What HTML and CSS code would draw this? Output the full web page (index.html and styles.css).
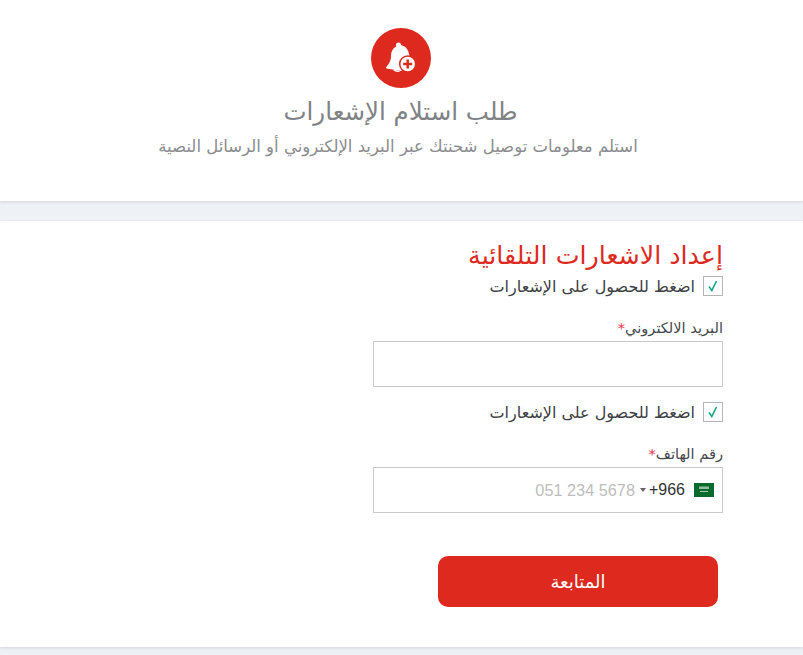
FILE: index.html
```html
<!DOCTYPE html>
<html lang="ar" dir="rtl">
<head>
<meta charset="utf-8">
<title>طلب استلام الإشعارات</title>
<link rel="stylesheet" href="styles.css">
</head>
<body>
<header class="hero">
  <div class="hero-icon">
    <svg viewBox="0 0 60 60" width="60" height="60" aria-hidden="true">
      <circle class="bell" cx="27.500" cy="17" r="2.500"/>
      <path class="bell" d="M25 18.500C30 15.500 35.500 18 37.500 24L39 30L40 38L30 43L15.500 40.500C14.800 40 15 39.300 15.500 38.800C19 35 20 31.500 20 28C20 24 21.500 20.500 25 18.500Z"/>
      <path class="bell" d="M22 41.500L29 43C28 44.500 24 44.500 22 41.500Z"/>
      <circle class="badge" cx="36.700" cy="36" r="8"/>
      <path class="plus" d="M36.700 31.500v9M32.200 36h9"/>
    </svg>
  </div>
  <h1 class="hero-title">طلب استلام الإشعارات</h1>
  <p class="hero-sub">استلم معلومات توصيل شحنتك عبر البريد الإلكتروني أو الرسائل النصية</p>
</header>
<main class="panel">
  <form class="form">
    <h2 class="form-title">إعداد الاشعارات التلقائية</h2>
    <label class="check">
      <span class="box"><svg viewBox="0 0 18 18" width="18" height="18" aria-hidden="true"><path class="tick" d="M5 9.500l2.800 4L12.500 4"/></svg></span>
      <span>اضغط للحصول على الإشعارات</span>
    </label>
    <div class="field">
      <div class="field-label">البريد الالكتروني<span class="req">*</span></div>
      <div class="input"></div>
    </div>
    <label class="check check-second">
      <span class="box"><svg viewBox="0 0 18 18" width="18" height="18" aria-hidden="true"><path class="tick" d="M5 9.500l2.800 4L12.500 4"/></svg></span>
      <span>اضغط للحصول على الإشعارات</span>
    </label>
    <div class="field field-phone">
      <div class="field-label">رقم الهاتف<span class="req">*</span></div>
      <div class="input phone" dir="ltr">
        <span class="placeholder">051 234 5678</span>
        <span class="caret"></span>
        <span class="code">+966</span>
        <svg class="flag" viewBox="0 0 20 14" width="20" height="14" aria-hidden="true">
          <rect width="20" height="14" fill="#0b6b2e"/>
          <rect x="5" y="3.500" width="10" height="2.500" fill="#8fbb9f"/>
          <rect x="6" y="8" width="8" height="1" fill="#a9cbb5"/>
        </svg>
      </div>
    </div>
    <div class="actions"><button type="button" class="submit">المتابعة</button></div>
  </form>
</main>
<div class="foot"></div>
</body>
</html>
```
FILE: styles.css
```css
* { box-sizing: border-box; }
html, body { margin: 0; padding: 0; }
body {
  background: #eef1f6;
  font-family: "DejaVu Sans", "Noto Sans", sans-serif;
  height: 655px;
  overflow: hidden;
}
.hero {
  background: #fff;
  height: 201px;
  padding-top: 28px;
  text-align: center;
  box-shadow: 0 1px 3px rgba(0,0,0,.12);
}
.hero-icon {
  width: 60px;
  height: 60px;
  margin: 0 372px 0 auto;
  border-radius: 50%;
  background: #dd291e;
}
.hero-icon svg { display: block; }
.bell { fill: #fff; }
.badge { fill: #fff; stroke: #dd291e; stroke-width: 1.500; }
.plus { stroke: #dd291e; stroke-width: 2.500; fill: none; }
.hero-title {
  margin: 8px 0 0;
  padding-right: 2px;
  font-size: 24.500px;
  line-height: 32px;
  font-weight: 400;
  color: #808285;
}
.hero-sub {
  margin: 8px 0 0;
  padding-right: 7px;
  font-size: 16.500px;
  line-height: 22px;
  color: #8a8c8f;
}
.panel {
  background: #fff;
  height: 426px;
  margin-top: 20px;
  padding: 20px 80px 0 0;
  box-shadow: 0 1px 3px rgba(0,0,0,.12);
}
.form { width: 350px; }
.form-title {
  margin: 0;
  font-size: 25.300px;
  line-height: 30px;
  font-weight: 400;
  color: #dd291e;
  white-space: nowrap;
}
.check {
  display: flex;
  align-items: center;
  gap: 8px;
  height: 24px;
  margin-top: 3px;
  font-size: 16px;
  color: #3c3f44;
}
.check-second { margin-top: 13px; }
.box {
  width: 20px;
  height: 20px;
  border: 1px solid #b5b5b5;
  background: #fff;
  flex: none;
  display: flex;
}
.tick { fill: none; stroke: #11a683; stroke-width: 1.600; }
.field { margin-top: 18px; }
.field-phone { margin-top: 18px; }
.field-label {
  font-size: 14.600px;
  line-height: 23px;
  color: #45484d;
}
.req { color: #e6304a; }
.input {
  height: 46px;
  margin-top: 2px;
  border: 1px solid #c9c9c9;
  background: #fff;
}
.phone {
  display: flex;
  align-items: center;
  justify-content: flex-end;
  padding-right: 8px;
  font-family: "Liberation Sans", Arial, sans-serif;
  font-size: 16px;
}
.placeholder { color: #bdbdbd; font-size: 16.300px; }
.caret {
  width: 0;
  height: 0;
  margin: 0 4px 0 5px;
  border-left: 3px solid transparent;
  border-right: 3px solid transparent;
  border-top: 4px solid #666;
}
.code { color: #333; margin-left: -1px; }
.flag { margin-left: 9px; flex: none; }
.actions { padding: 43px 5px 0 5px; }
.submit {
  display: block;
  width: 280px;
  height: 51px;
  margin-right: 0;
  border: 0;
  border-radius: 10px;
  background: #dd291e;
  color: #fff;
  font-family: inherit;
  font-size: 18px;
  font-weight: 400;
}
.foot { height: 8px; }
```
